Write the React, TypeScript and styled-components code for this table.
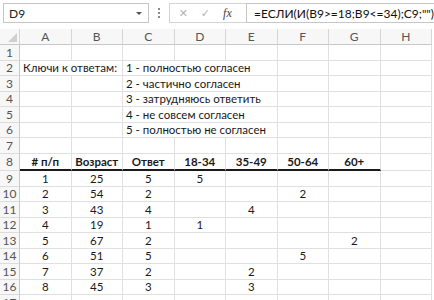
import styled, { createGlobalStyle } from 'styled-components'

const GlobalStyle = createGlobalStyle`
  body {
    margin: 0;
    background: #fff;
    font-family: Lato, 'Liberation Sans', sans-serif;
  }
`

const Page = styled.div`
  width: 434px;
  height: 300px;
  overflow: hidden;
  background: #fff;
`

const FormulaBar = styled.div`
  display: flex;
  height: 20px;
  padding: 3px 0 0 3px;
`

const NameBox = styled.div`
  box-sizing: border-box;
  width: 153px;
  display: flex;
  align-items: center;
  justify-content: space-between;
  padding: 0 6px 0 5px;
  border: 1px solid #c6c6c6;
  font-size: 12px;
  color: #222;
`

const Caret = styled.span`
  width: 0;
  height: 0;
  border-left: 3px solid transparent;
  border-right: 3px solid transparent;
  border-top: 3px solid #555;
`

const Grip = styled.div`
  width: 21px;
  display: flex;
  flex-direction: column;
  align-items: center;
  justify-content: center;
  gap: 2px;

  span {
    width: 2px;
    height: 2px;
    background: #8a8a8a;
  }
`

const ActionBox = styled.div`
  box-sizing: border-box;
  width: 81px;
  display: flex;
  align-items: center;
  padding-left: 9px;
  gap: 13px;
  border: 1px solid #d4d4d4;
  border-right: none;
  color: #b4b4b4;
  font-family: 'DejaVu Sans', sans-serif;
  font-size: 11px;
`

const Fx = styled.span`
  font-family: 'Liberation Serif', serif;
  font-style: italic;
  font-size: 12px;
  color: #444;
`

const FormulaInput = styled.div`
  flex: 1;
  box-sizing: border-box;
  display: flex;
  align-items: center;
  padding-left: 7px;
  border: 1px solid #c6c6c6;
  border-right: none;
  font-size: 12px;
  color: #111;
  white-space: nowrap;
`

const Grid = styled.div`
  display: grid;
  grid-template-columns: 20px repeat(8, 51.5px);
  grid-template-rows: 16px repeat(7, 15.5px) 17.5px repeat(9, 15.5px);
  margin-top: 6px;
  font-size: 11.5px;
`

const HeaderCell = styled.div`
  box-sizing: border-box;
  display: flex;
  align-items: center;
  justify-content: center;
  position: relative;
  background: #f7f7f7;
  color: #555;
  border-right: 1px solid #d6d6d6;
  border-bottom: 1px solid #c8c8c8;
  font-size: 12px;
`

const CornerMark = styled.span`
  position: absolute;
  right: 2px;
  bottom: 2px;
  width: 0;
  height: 0;
  border-left: 9px solid transparent;
  border-bottom: 9px solid #cfcfcf;
`

const RowHead = styled.div`
  box-sizing: border-box;
  display: flex;
  align-items: center;
  justify-content: center;
  background: #f7f7f7;
  color: #555;
  border-right: 1px solid #c8c8c8;
  border-bottom: 1px solid #dcdcdc;
  font-size: 12px;
`

const Cell = styled.div<{ $span: number; $align: string; $bold?: boolean; $rule?: boolean }>`
  box-sizing: border-box;
  grid-column: span ${(p) => p.$span};
  display: flex;
  align-items: center;
  justify-content: ${(p) => p.$align};
  padding: 0 3px;
  border-right: 1px solid #e0e0e0;
  border-bottom: ${(p) => (p.$rule ? '2px solid #1a1a1a' : '1px solid #e0e0e0')};
  color: #1a1a1a;
  font-weight: ${(p) => (p.$bold ? 700 : 400)};
  white-space: nowrap;
  overflow: visible;
`

type CellDef = { col: number; text: string; span?: number; align?: 'flex-start' | 'center' }

const columns = ['A', 'B', 'C', 'D', 'E', 'F', 'G', 'H']

const keys = [
  '1 - полностью согласен',
  '2 - частично согласен',
  '3 - затрудняюсь ответить',
  '4 - не совсем согласен',
  '5 - полностью не согласен',
]

const headings = ['# п/п', 'Возраст', 'Ответ', '18-34', '35-49', '50-64', '60+']

// [номер, возраст, ответ, колонка возрастной группы]
const answers: [number, number, number, number][] = [
  [1, 25, 5, 3],
  [2, 54, 2, 5],
  [3, 43, 4, 4],
  [4, 19, 1, 3],
  [5, 67, 2, 6],
  [6, 51, 5, 5],
  [7, 37, 2, 4],
  [8, 45, 3, 4],
]

function buildRows(): Record<number, CellDef[]> {
  const rows: Record<number, CellDef[]> = {}
  rows[2] = [
    { col: 0, text: 'Ключи к ответам:', span: 2, align: 'flex-start' },
    { col: 2, text: keys[0], span: 3, align: 'flex-start' },
  ]
  keys.slice(1).forEach((k, i) => {
    rows[3 + i] = [{ col: 2, text: k, span: 3, align: 'flex-start' }]
  })
  rows[8] = headings.map((h, i) => ({ col: i, text: h }))
  answers.forEach(([n, age, ans, group], i) => {
    rows[9 + i] = [
      { col: 0, text: String(n) },
      { col: 1, text: String(age) },
      { col: 2, text: String(ans) },
      { col: group, text: String(ans) },
    ]
  })
  return rows
}

const rows = buildRows()

function SheetRow({ index }: { index: number }) {
  const defs = rows[index] ?? []
  const cells = []
  let col = 0
  while (col < columns.length) {
    const def = defs.find((d) => d.col === col)
    const span = def?.span ?? 1
    cells.push(
      <Cell
        key={col}
        $span={span}
        $align={def?.align ?? 'center'}
        $bold={index === 8}
        $rule={index === 8 && col < 7}
      >
        {def?.text}
      </Cell>
    )
    col += span
  }
  return (
    <>
      <RowHead>{index}</RowHead>
      {cells}
    </>
  )
}

export default function App() {
  return (
    <Page>
      <GlobalStyle />
      <FormulaBar>
        <NameBox>
          <span>D9</span>
          <Caret />
        </NameBox>
        <Grip>
          <span />
          <span />
          <span />
        </Grip>
        <ActionBox>
          <span>✕</span>
          <span>✓</span>
          <Fx>fx</Fx>
        </ActionBox>
        <FormulaInput>=ЕСЛИ(И(B9&gt;=18;B9&lt;=34);C9;"")</FormulaInput>
      </FormulaBar>
      <Grid>
        <HeaderCell>
          <CornerMark />
        </HeaderCell>
        {columns.map((c) => (
          <HeaderCell key={c}>{c}</HeaderCell>
        ))}
        {Array.from({ length: 17 }, (_, i) => (
          <SheetRow key={i} index={i + 1} />
        ))}
      </Grid>
    </Page>
  )
}
